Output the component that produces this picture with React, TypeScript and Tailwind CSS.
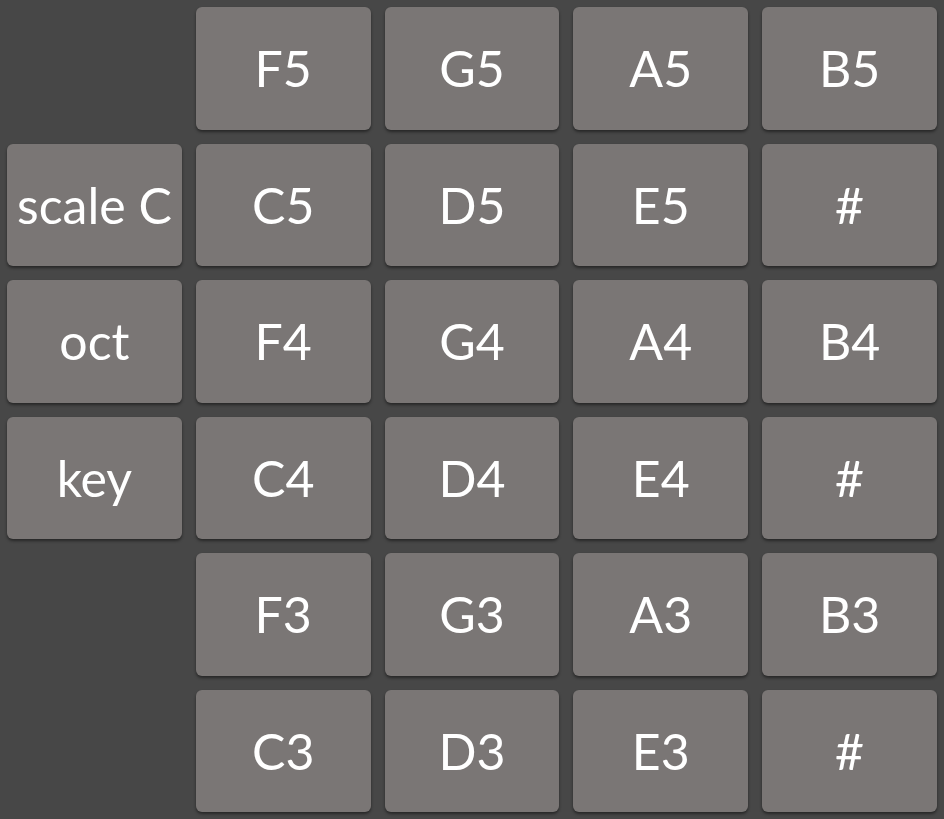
const rows: (string | null)[][] = [
  [null, 'F5', 'G5', 'A5', 'B5'],
  ['scale C', 'C5', 'D5', 'E5', '#'],
  ['oct', 'F4', 'G4', 'A4', 'B4'],
  ['key', 'C4', 'D4', 'E4', '#'],
  [null, 'F3', 'G3', 'A3', 'B3'],
  [null, 'C3', 'D3', 'E3', '#'],
];

export default function App() {
  return (
    <div
      className="grid h-screen w-screen grid-cols-5 grid-rows-6 bg-[#474747] text-white"
      style={{ fontFamily: '"Lato", "Open Sans", sans-serif' }}
    >
      {rows.flatMap((row, r) =>
        row.map((label, c) => (
          <div key={`${r}-${c}`} className="p-[7px]">
            {label && (
              <button className="flex h-full w-full items-center justify-center rounded-[6px] bg-[#7a7675] text-[50px] leading-none text-white shadow-[0_2px_3px_rgba(0,0,0,0.45)]">
                {label}
              </button>
            )}
          </div>
        ))
      )}
    </div>
  );
}
